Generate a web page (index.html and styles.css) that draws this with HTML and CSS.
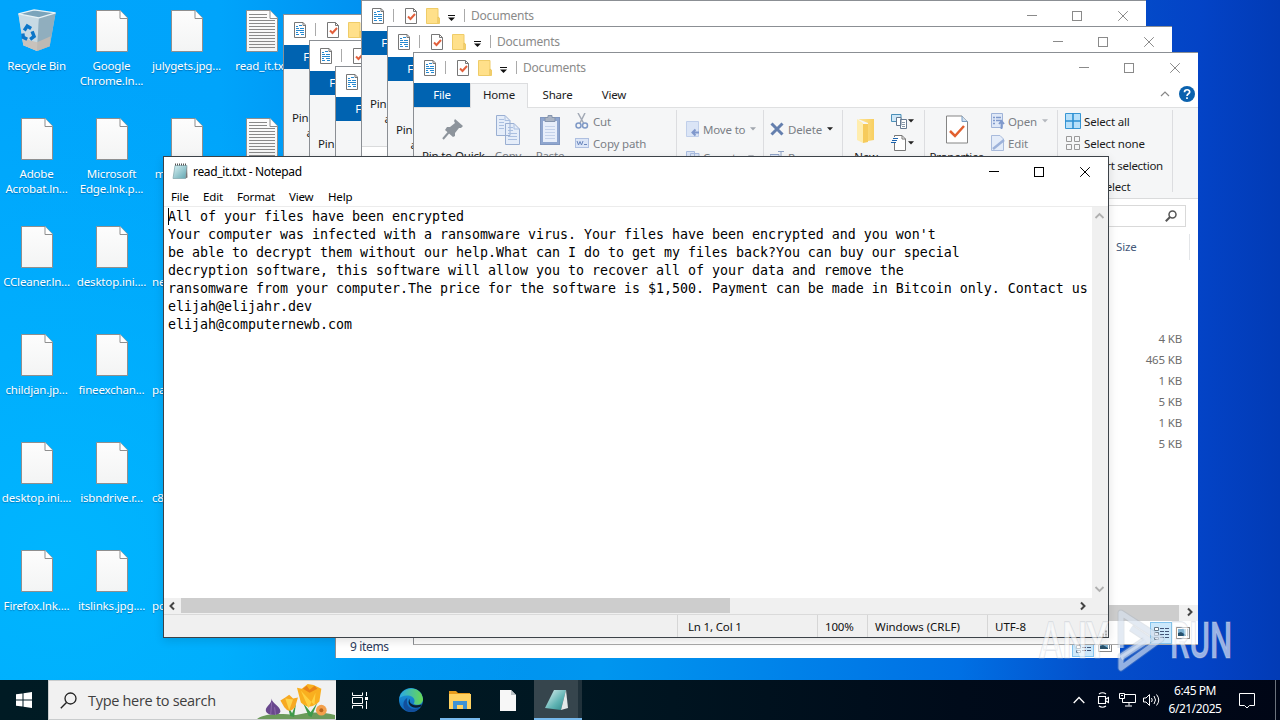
FILE: index.html
```html
<!DOCTYPE html>
<html lang="en">
<head>
<meta charset="utf-8">
<title>Desktop</title>
<link rel="stylesheet" href="styles.css">
</head>
<body>
<svg class="defs" aria-hidden="true">
  <defs>
    <linearGradient id="paper" x1="0" y1="0" x2="0" y2="1"><stop offset="0" stop-color="#fdfdfd"/><stop offset="1" stop-color="#f3f4f4"/></linearGradient>
    <linearGradient id="pad" x1="0" y1="0" x2="1" y2="1"><stop offset="0" stop-color="#d9f1f3"/><stop offset="1" stop-color="#5fa5b0"/></linearGradient>
    <linearGradient id="padBig" x1="0" y1="0" x2="1" y2="1"><stop offset="0" stop-color="#e4f3f3"/><stop offset=".6" stop-color="#5fb3b3"/><stop offset="1" stop-color="#2c8588"/></linearGradient>
    <linearGradient id="edgeBlue" x1="0" y1="0" x2="0" y2="1"><stop offset="0" stop-color="#1fa0dc"/><stop offset="1" stop-color="#0d62bc"/></linearGradient>
    <linearGradient id="edgeGreen" x1="0" y1="0" x2="1" y2="0"><stop offset="0" stop-color="#2aa9e6"/><stop offset="1" stop-color="#68d852"/></linearGradient>
    <linearGradient id="fold" x1="0" y1="0" x2="1" y2="0"><stop offset="0" stop-color="#ffe69a"/><stop offset="1" stop-color="#f8cf61"/></linearGradient>
  </defs>
  <symbol id="page" viewBox="0 0 32 42"><path d="M.5.5H24L31.500 8V41.500H.5z" fill="url(#paper)" stroke="#8f8f8f"/><path d="M24 .5V8.500H31.500" fill="#fff" stroke="#8f8f8f"/></symbol>
  <symbol id="textpage" viewBox="0 0 32 42"><use href="#page"/><path d="M3 4.500H21M3 7.500H21M3 10.500H29M3 13.500H29M3 16.500H29M3 19.500H29M3 22.500H29M3 25.500H29M3 28.500H29M3 31.500H29M3 34.500H29M3 37.500H29" stroke="#8a8a8a"/></symbol>
  <symbol id="doc" viewBox="0 0 14 16"><path d="M1.500.5H10L12.500 3V15.500H1.500z" fill="#fff" stroke="#777"/><path d="M10 .5V3.500H12.500" fill="none" stroke="#777"/><path d="M3 4.500H5M6 3.500H9M3 6.500H6M7 6.500H11M3 8.500H11M3 10.500H5M7 10.500H11M3 12.500H6M8 12.500H11" stroke="#2589d0" stroke-width="1.200"/></symbol>
  <symbol id="check" viewBox="0 0 14 16"><path d="M1.500.5H9.500L12.500 3.500V15.500H1.500z" fill="#fff" stroke="#777"/><path d="M9.500.5V3.500H12.500" fill="none" stroke="#777"/><path d="M4 8.500L6.500 11L11 6" fill="none" stroke="#e2603c" stroke-width="2"/></symbol>
  <symbol id="yfolder" viewBox="0 0 14 16"><path d="M.5.5H12V9L13.500 10V15.500H.5z" fill="#ffe08a" stroke="#efcc68"/><path d="M12 9V15" stroke="#e3ba4e"/></symbol>
  <symbol id="drop" viewBox="0 0 7 6"><path d="M0 .5H7" stroke="#111"/><path d="M0 2.500H7L3.500 6z" fill="#111"/></symbol>
  <symbol id="min" viewBox="0 0 10 10"><path d="M0 4.500H10" stroke="currentColor"/></symbol>
  <symbol id="max" viewBox="0 0 10 10"><rect x=".5" y=".5" width="9" height="9" fill="none" stroke="currentColor"/></symbol>
  <symbol id="close" viewBox="0 0 10 10"><path d="M.2.2L9.800 9.800M9.800.2L.2 9.800" stroke="currentColor"/></symbol>
  <symbol id="caret" viewBox="0 0 6 4"><path d="M0 .3H6L3 3.500z" fill="currentColor"/></symbol>
  <symbol id="details" viewBox="0 0 22 22"><rect x=".5" y=".5" width="21" height="21" fill="#cce8fb" stroke="#84c4ee"/><path d="M4.500 5.500h4v3h-4zM4.500 10.500h4v3h-4zM4.500 15.500h4v2h-4z" fill="#fff" stroke="#678"/><path d="M10 6.500h4M15 6.500h4M10 9.500h4M15 9.500h4M10 12.500h4M15 12.500h4M10 15.500h4M15 15.500h4" stroke="#457"/></symbol>
  <symbol id="thumbs" viewBox="0 0 14 12"><rect x=".5" y=".5" width="13" height="11" fill="#fff" stroke="#888"/><rect x="2" y="2" width="8" height="7" fill="#7fb2d2"/><path d="M2 9V6L5 5L10 8V9z" fill="#27506a"/><path d="M11.500 2V9" stroke="#789"/></symbol>
</svg>

<main class="desktop">
  <section class="icons">
    <div class="cell">
      <svg class="bin" viewBox="0 0 40 44"><path d="M1 5L17 1L39 4L33 38L20 43L6 37z" fill="#a9c4d3"/><path d="M1 5L22 9L20 43L6 37z" fill="#c7dae4"/><path d="M22 9L39 4L33 38L20 43z" fill="#90aebe"/><path d="M5 30L20 34L34 28L33 38L20 43L6 37z" fill="#c8bcb2" opacity=".8"/><path d="M1 5L17 1L39 4L22 9z" fill="#7ba4bb" stroke="#e8f2f6" stroke-width="1.300"/><g fill="none" stroke="#0c76c8" stroke-width="3.500"><path d="M7 22L10 17.500L14 20"/><path d="M15 23L17 28L13 31"/><path d="M10 31L6 29L5.500 25"/></g></svg>
      <span>Recycle Bin</span></div>
    <div class="cell"><svg><use href="#page"/></svg><span>Google<br>Chrome.ln...</span></div>
    <div class="cell"><svg><use href="#page"/></svg><span>julygets.jpg...</span></div>
    <div class="cell"><svg><use href="#textpage"/></svg><span>read_it.txt</span></div>

    <div class="cell"><svg><use href="#page"/></svg><span>Adobe<br>Acrobat.ln...</span></div>
    <div class="cell"><svg><use href="#page"/></svg><span>Microsoft<br>Edge.lnk.p...</span></div>
    <div class="cell start"><svg><use href="#page"/></svg><span>&nbsp;m</span></div>
    <div class="cell"><svg><use href="#textpage"/></svg></div>

    <div class="cell"><svg><use href="#page"/></svg><span>CCleaner.ln...</span></div>
    <div class="cell"><svg><use href="#page"/></svg><span>desktop.ini....</span></div>
    <div class="cell start"><span class="low">ne</span></div>
    <div class="cell"></div>

    <div class="cell"><svg><use href="#page"/></svg><span>childjan.jp...</span></div>
    <div class="cell"><svg><use href="#page"/></svg><span>fineexchan...</span></div>
    <div class="cell start"><span class="low">pa</span></div>
    <div class="cell"></div>

    <div class="cell"><svg><use href="#page"/></svg><span>desktop.ini....</span></div>
    <div class="cell"><svg><use href="#page"/></svg><span>isbndrive.r...</span></div>
    <div class="cell start"><span class="low">c8</span></div>
    <div class="cell"></div>

    <div class="cell"><svg><use href="#page"/></svg><span>Firefox.lnk....</span></div>
    <div class="cell"><svg><use href="#page"/></svg><span>itslinks.jpg....</span></div>
    <div class="cell start"><span class="low">pc</span></div>
    <div class="cell"></div>
  </section>

  <section class="win explorer w1">
    <header class="bar"><svg class="i14"><use href="#doc"/></svg><i class="sep s1"></i><svg class="i14"><use href="#check"/></svg><svg class="i14 fo"><use href="#yfolder"/></svg></header>
    <nav class="tabs"><b class="file">File</b></nav>
    <div class="ribbon"><div class="pin stub"><span>Pin to Quick<br>access</span></div></div>
  </section>
  <section class="win explorer w2">
    <header class="bar"><svg class="i14"><use href="#doc"/></svg><i class="sep s1"></i><svg class="i14"><use href="#check"/></svg></header>
    <nav class="tabs"><b class="file">File</b></nav>
    <div class="ribbon"><div class="pin stub"><span>Pin to Quick<br>access</span></div></div>
  </section>
  <section class="win explorer w3">
    <header class="bar"><svg class="i14"><use href="#doc"/></svg></header>
    <nav class="tabs"><b class="file">File</b></nav>
    <div class="ribbon"></div>
    <div class="filler"></div>
    <footer class="foot"><span class="count">9 items</span><svg class="v1"><use href="#details"/></svg><svg class="v2"><use href="#thumbs"/></svg></footer>
  </section>
  <section class="win explorer w4">
    <header class="bar"><svg class="i14"><use href="#doc"/></svg><i class="sep s1"></i><svg class="i14"><use href="#check"/></svg><svg class="i14 fo"><use href="#yfolder"/></svg><svg class="dd"><use href="#drop"/></svg><i class="sep s2"></i><span class="title">Documents</span><span class="ctl"><svg><use href="#min"/></svg><svg><use href="#max"/></svg><svg><use href="#close"/></svg></span></header>
    <nav class="tabs"><b class="file">File</b></nav>
    <div class="ribbon"><div class="pin stub"><span>Pin to Quick<br>access</span></div></div>
  </section>
  <section class="win explorer w5">
    <header class="bar"><svg class="i14"><use href="#doc"/></svg><i class="sep s1"></i><svg class="i14"><use href="#check"/></svg><svg class="i14 fo"><use href="#yfolder"/></svg><svg class="dd"><use href="#drop"/></svg><i class="sep s2"></i><span class="title">Documents</span><span class="ctl"><svg><use href="#min"/></svg><svg><use href="#max"/></svg><svg><use href="#close"/></svg></span></header>
    <nav class="tabs"><b class="file">File</b></nav>
    <div class="ribbon"><div class="pin stub"><span>Pin to Quick<br>access</span></div></div>
  </section>

  <section class="win explorer w6">
    <header class="bar"><svg class="i14"><use href="#doc"/></svg><i class="sep s1"></i><svg class="i14"><use href="#check"/></svg><svg class="i14 fo"><use href="#yfolder"/></svg><svg class="dd"><use href="#drop"/></svg><i class="sep s2"></i><span class="title">Documents</span><span class="ctl"><svg><use href="#min"/></svg><svg><use href="#max"/></svg><svg><use href="#close"/></svg></span></header>
    <nav class="tabs"><b class="file">File</b><span class="home">Home</span><span class="tab">Share</span><span class="tab view">View</span>
      <svg class="help" viewBox="0 0 35 16"><path d="M1 10L5 6L9 10" fill="none" stroke="#888" stroke-width="1.200"/><circle cx="27" cy="8" r="8" fill="#0b62ae"/><path d="M24.500 6.200C24.500 3 29.800 3 29.700 6C29.700 7.800 27 7.800 27 10M27 11.200V13" fill="none" stroke="#fff" stroke-width="1.700"/></svg>
    </nav>
    <div class="ribbon">
      <div class="group g1">
        <div class="pin"><svg viewBox="0 0 22 22"><path d="M13 1L21 8L19 10L17 10L13 15L13 18L11 19L3 12L5 9L8 9L13 5L12 3z" fill="#8d949c"/><path d="M7 14L1 21" stroke="#8d949c" stroke-width="2"/></svg><span>Pin to Quick<br>access</span></div>
        <div class="big copy"><svg viewBox="0 0 24 30"><path d="M.5.5H9L14 5.500V20.500H.5zM9.500 8.500H18L23.500 14V29.500H9.500z" fill="#e5edf9" stroke="#9aafd2"/><path d="M9 .5V5.500H14M18 8.500V14H23.500M3 4.500h5M3 7.500h5M3 10.500h5M3 13.500h5M12 12.500h5M12 15.500h5M12 18.500h9M12 21.500h9M12 24.500h9" fill="none" stroke="#aabfe0"/></svg><span>Copy</span></div>
        <div class="big paste"><svg viewBox="0 0 22 30"><rect x="1.500" y="2.500" width="19" height="27" fill="#8fa6cf" stroke="#8298c0"/><rect x="4" y="6" width="14" height="21" fill="#e7eefa"/><path d="M6 2.500h3V.5h4v2h3v4H6z" fill="#aab4c4" stroke="#8595ae"/><path d="M6 11.500h10M6 14.500h10M6 17.500h10M6 20.500h10M6 23.500h10" stroke="#c4d2ea"/></svg><span>Paste</span></div>
        <div class="list muted"><div><svg viewBox="0 0 14 16"><path d="M3 0L8.500 10M10 0L5 10" stroke="#a3aab6" stroke-width="1.500" fill="none"/><circle cx="3.500" cy="12.500" r="2.500" fill="none" stroke="#7f99c6" stroke-width="1.500"/><circle cx="10" cy="12.500" r="2.500" fill="none" stroke="#7f99c6" stroke-width="1.500"/></svg>Cut</div><div><svg viewBox="0 0 14 16"><rect x=".5" y="3.500" width="13" height="9" fill="#dce6f7" stroke="#aebfe0"/><path d="M2 6l1.500 4L5 6.500L6.500 10L8 6M9 9.500h3" fill="none" stroke="#6b87bd"/></svg>Copy path</div></div>
      </div>
      <div class="group g2 muted">
        <div class="line"><svg viewBox="0 0 14 16"><path d="M.5.5H12.500V15.500H.5z" fill="#dbe5f6" stroke="#c0cfea"/><path d="M13 11.500H7M9.500 8.500L6.500 11.500L9.500 14.500" fill="none" stroke="#8098cc" stroke-width="2"/></svg>Move to<svg class="ca"><use href="#caret"/></svg></div>
        <div class="line"><svg viewBox="0 0 14 16"><path d="M.5 2.500H8.500V15H.5zM4.500 4.500H13V15H4.500z" fill="#dbe5f6" stroke="#aabde0"/></svg>Copy to<svg class="ca"><use href="#caret"/></svg></div>
      </div>
      <div class="group g3 muted">
        <div class="line"><svg viewBox="0 0 14 16"><path d="M1.500 2.500L12.500 13.500M12.500 2.500L1.500 13.500" stroke="#647fae" stroke-width="3"/></svg>Delete<svg class="ca dark"><use href="#caret"/></svg></div>
        <div class="line"><svg viewBox="0 0 14 16"><path d="M0 5.500H9V10H0zM8 2.500H14M11 2.500V14" fill="#dbe5f6" stroke="#8fa3c6"/></svg>Rename</div>
      </div>
      <div class="group g4">
        <div class="big new"><svg viewBox="0 0 20 26"><path d="M2 1H18V22L12 23V5z" fill="url(#fold)"/><path d="M1 1L7 5V25L1 22z" fill="#ffedae"/><path d="M7 6H12V24L7 25z" fill="#f6cb5c"/></svg><span>New</span></div>
        <div class="mini"><div><svg viewBox="0 0 16 16"><path d="M.5 1.500H10V8.500H.5z" fill="#cfe7f7" stroke="#4a8fb8"/><path d="M5.500 4.500H10V12.500H5.500zM9.500 6.500H15.500V15.500H9.500z" fill="#fff" stroke="#647890"/><path d="M11 9.500h3M11 11.500h3M11 13.500h3" stroke="#89a"/></svg><svg class="ca dark"><use href="#caret"/></svg></div><div><svg viewBox="0 0 16 16"><path d="M3.500 2V.5H11L14.500 4V15.500H3.500V8" fill="#fff" stroke="#777"/><path d="M11 .5V4H14.500" fill="none" stroke="#777"/><path d="M2 3.500h5M1 5.500h5M0 7.500h5" fill="none" stroke="#1b63ae" stroke-width="1.200"/></svg><svg class="ca dark"><use href="#caret"/></svg></div></div>
      </div>
      <div class="group g5">
        <div class="big props"><svg viewBox="0 0 22 28"><path d="M.5.5H16L21.500 6V27.500H.5z" fill="#fff" stroke="#858585"/><path d="M16 .5V6H21.500" fill="#cfe0f2" stroke="#7a9cc0"/><path d="M4 15.500L9 20.500L18 10.500" fill="none" stroke="#e2602f" stroke-width="2.500"/></svg><span>Properties</span></div>
        <div class="list muted op"><div><svg viewBox="0 0 14 16"><path d="M.5.5H11.500V14.500H.5z" fill="#dfe8f7" stroke="#9fb3d8"/><path d="M2 4.500h2M5 4.500h5M2 7.500h2M5 7.500h5M2 10.500h2" stroke="#7f99cc" stroke-width="1.500"/><path d="M10.500 16V9M8 11L10.500 8L13 11" fill="none" stroke="#7f99cc" stroke-width="1.800"/></svg>Open<svg class="ca pale"><use href="#caret"/></svg></div><div><svg viewBox="0 0 14 16"><path d="M.5.5H9L12.500 4V15.500H.5z" fill="#e4ecf9" stroke="#a9bbdc"/><path d="M2 14L13 5" stroke="#9db2da" stroke-width="2.500"/></svg>Edit</div></div>
      </div>
      <div class="group g6">
        <div class="list sel"><div><svg viewBox="0 0 16 16"><path d="M.5.5h15v15H.5z" fill="#b7e0fa" stroke="#3796d4"/><path d="M8 0v16M0 8h16" stroke="#2d8fd2" stroke-width="1.600"/></svg>Select all</div><div><svg viewBox="0 0 16 16"><path d="M1.500 1.500h5v5h-5zM9.500 1.500h5v5h-5zM1.500 9.500h5v5h-5zM9.500 9.500h5v5h-5z" fill="none" stroke="#999"/></svg>Select none</div><div class="inv"><svg></svg>Invert selection</div></div>
        <div class="caption">Select</div>
      </div>
    </div>
    <div class="body">
      <div class="search"><svg viewBox="0 0 12 12"><circle cx="7.500" cy="4.500" r="3.500" fill="none" stroke="#555" stroke-width="1.500"/><path d="M5 7L.8 11.200" stroke="#555" stroke-width="2"/></svg></div>
      <div class="head">Size</div>
      <div class="sizes"><span>4 KB</span><span>465 KB</span><span>1 KB</span><span>5 KB</span><span>1 KB</span><span>5 KB</span></div>
    </div>
    <div class="hbar"><i></i><svg viewBox="0 0 19 16"><path d="M9 3.500L12.500 7L9 10.500" fill="none" stroke="#444" stroke-width="2"/></svg></div>
    <footer class="foot"><svg class="v1"><use href="#details"/></svg><svg class="v2"><use href="#thumbs"/></svg></footer>
  </section>

  <section class="win notepad">
    <header class="ntitle">
      <svg viewBox="0 0 16 17"><path d="M3 2.500H15L13.500 15.500H1z" fill="url(#pad)" stroke="#86aab0" stroke-width=".8"/><path d="M15 2.500L15.500 14.500L13.500 15.500z" fill="#777"/><path d="M3 1.500H15" stroke="#555" stroke-width="2" stroke-dasharray="1 1"/></svg>
      <span>read_it.txt - Notepad</span>
      <span class="ctl black"><svg><use href="#min"/></svg><svg><use href="#max"/></svg><svg><use href="#close"/></svg></span>
    </header>
    <nav class="menu"><span class="m1">File</span><span class="m2">Edit</span><span class="m3">Format</span><span class="m4">View</span><span>Help</span></nav>
    <div class="pane">
      <pre class="text">All of your files have been encrypted
Your computer was infected with a ransomware virus. Your files have been encrypted and you won't
be able to decrypt them without our help.What can I do to get my files back?You can buy our special
decryption software, this software will allow you to recover all of your data and remove the
ransomware from your computer.The price for the software is $1,500. Payment can be made in Bitcoin only. Contact us
elijah@elijahr.dev
elijah@computernewb.com</pre>
      <div class="vbar"><svg viewBox="0 0 16 18"><path d="M3.500 11L7.500 7L11.500 11" fill="none" stroke="#b0b0b0" stroke-width="1.800"/></svg><svg viewBox="0 0 16 18"><path d="M3.500 7L7.500 11L11.500 7" fill="none" stroke="#b0b0b0" stroke-width="1.800"/></svg></div>
    </div>
    <div class="nh"><svg viewBox="0 0 17 16"><path d="M10 4.500L6.500 8L10 11.500" fill="none" stroke="#444" stroke-width="2"/></svg><i></i><svg class="r" viewBox="0 0 17 16"><path d="M7 4.500L10.500 8L7 11.500" fill="none" stroke="#444" stroke-width="2"/></svg></div>
    <footer class="nstat"><span class="c0"></span><span class="c1">Ln 1, Col 1</span><span class="c2">100%</span><span class="c3">Windows (CRLF)</span><span class="c4">UTF-8</span><svg class="grip" viewBox="0 0 10 10"><path d="M1 8.500h2M4 8.500h2M7 8.500h2M4 5.500h2M7 5.500h2M7 2.500h2" stroke="#aaa" stroke-width="2"/></svg></footer>
  </section>

  <svg class="mark" viewBox="0 0 204 64">
    <g class="letters">
      <text x="2" y="50" textLength="69" lengthAdjust="spacingAndGlyphs">ANY</text>
      <text x="133" y="50" textLength="62" lengthAdjust="spacingAndGlyphs">RUN</text>
    </g>
    <g fill="none" stroke="#9fabbd" stroke-opacity=".3" stroke-width="7" stroke-linejoin="round"><path d="M84 40V5L124 31L84 60V48L108 32"/><path d="M94 20L112 32L84 50"/></g>
    <g fill="none" stroke="#e4ecfa" stroke-opacity=".55" stroke-width="5" stroke-linejoin="round"><path d="M84 40V5L124 31L84 60V48L108 32"/><path d="M94 20L112 32L84 50"/></g>
  </svg>
</main>

<footer class="taskbar">
  <div class="startbtn"><svg viewBox="0 0 16 16"><path d="M0 2.300L6.500 1.400V7.500H0zM7.500 1.200L16 0V7.500H7.500zM0 8.500H6.500V14.600L0 13.700zM7.500 8.500H16V16L7.500 14.800z" fill="#fff"/></svg></div>
  <div class="find">
    <svg class="glass" viewBox="0 0 17 17"><circle cx="10.500" cy="6.500" r="5.500" fill="none" stroke="#222" stroke-width="1.300"/><path d="M6.500 10.500L.8 16.200" stroke="#222" stroke-width="1.400"/></svg>
    <span>Type here to search</span>
    <svg class="flowers" viewBox="0 0 80 39"><path d="M0 39C10 32 28 34 40 35C55 31 70 32 80 35V39z" fill="#6b9a5a"/><path d="M34 36L31 24L36 33L40 23L38 37zM53 36L47 22L55 32L62 22L56 37z" fill="#3f9a4a"/><path d="M15 18C15 23 24 26 24 31C24 36 9 36 9 30C9 26 15 24 15 18" fill="#69478d"/><path d="M15 22L14 35M18 27L19 35" stroke="#8d6bac"/><path d="M24 20L29 17L33 14L37 18L42 17L39 27Q33 34 28 27z" fill="#f7a922"/><path d="M29 18L33 30L37 19" fill="#fdd34c"/><path d="M41 7L46 8L52 3L58 4L66 8L64 21Q54 31 45 22z" fill="#f9af1f"/><path d="M45 10L53 28L60 12L59 25" fill="#ffd040"/><path d="M47 8L51 5L54 9L59 5L62 8L54 12z" fill="#e98318"/><circle cx="66" cy="30" r="5.500" fill="#f3a04c"/><circle cx="66" cy="30" r="2" fill="#b8651c"/></svg>
  </div>
  <div class="tasks">
    <div><svg width="18" height="17" viewBox="0 0 18 17"><path d="M1.500.5V3.500H11.500V.5M1.500 16.500V13.500H11.500V16.500M1.500 5.500H11.500V11.500H1.500zM15.500 0V4M15.500 9V17" fill="none" stroke="#fff"/><path d="M14 5h3v3h-3z" fill="#fff"/></svg></div>
    <div class="edge"><svg width="24" height="24" viewBox="0 0 24 24"><circle cx="12" cy="12" r="12" fill="url(#edgeBlue)"/><path d="M.5 10C2-1 22-4 24 11C24 17 17 18 14.500 15.500C17 13 15 8 9.500 7.500C5 7 1.500 9 .5 10" fill="url(#edgeGreen)"/><path d="M8 12C7 20 14 23 21 19.500C18 24 12 25 8 23C3 20 3 12 9 9.500C8 10 8 11 8 12" fill="#124f9c"/><path d="M11 11C9 15 14 19 23 16.500L22 18.500C14 22 8 17 10 12z" fill="#0a1d30"/></svg></div>
    <div class="run"><svg width="22" height="20" viewBox="0 0 22 20"><path d="M0 1H7L9 3H21V19H0z" fill="#e79c1d"/><path d="M0 4H22V19H0z" fill="#ffd262"/><path d="M4 19V11H18V19H14V15H8V19z" fill="#3f93d6"/></svg></div>
    <div><svg width="16" height="21" viewBox="0 0 16 21"><path d="M0 0H11L16 5V21H0z" fill="#f7f7f7"/><path d="M11 0V5H16z" fill="#bcc3c7"/></svg></div>
    <div class="active"><svg width="24" height="21" viewBox="0 0 24 21"><path d="M9 0H21L16 20L0 18z" fill="url(#padBig)"/><path d="M21 0L23 18L16 20z" fill="#e3e8e8"/></svg></div>
  </div>
  <div class="tray">
    <svg class="up" width="12" height="8" viewBox="0 0 12 8"><path d="M.7 7L6 1.500L11.300 7" fill="none" stroke="#fff" stroke-width="1.300"/></svg>
    <svg class="cam" width="12" height="16" viewBox="0 0 12 16"><path d="M2 2Q5.500-.5 9 2M2 14Q5.500 16.500 9 14M1.500 4.500H8.500V11.500H1.500zM9 7L11.500 5.500V10.500L9 9" fill="none" stroke="#fff" stroke-width="1.100"/></svg>
    <svg class="net" width="17" height="14" viewBox="0 0 17 14"><path d="M6 1.500H16.500V9.500H3.500V6M10 9.500V12.500M6 13H13M.5.500H5.500V5.500H.5zM2 2.500H4" fill="none" stroke="#fff"/></svg>
    <svg class="vol" width="17" height="14" viewBox="0 0 17 14"><path d="M.5 5H3L6.500 1.500V12.500L3 9H.5zM8.500 5Q10 7 8.500 9M11 3Q14 7 11 11M13.500 1.500Q18 7 13.500 12.500" fill="none" stroke="#fff"/></svg>
    <div class="clock"><span>6:45 PM</span><span>6/21/2025</span></div>
    <svg class="note" width="16" height="16" viewBox="0 0 16 16"><path d="M.5.500H15.500V12.500H10.500L8 15L5.500 12.500H.5z" fill="none" stroke="#fff"/></svg>
  </div>
</footer>
</body>
</html>
```
FILE: styles.css
```css
* { box-sizing: border-box; }
body {
  margin: 0; width: 1280px; height: 720px; overflow: hidden;
  display: flex; flex-direction: column;
  font-family: "Noto Sans", "Open Sans", sans-serif; font-size: 11.5px; color: #1b1b1b;
  letter-spacing: -0.17px;
}
svg { display: block; flex: none; }
.defs { position: absolute; width: 0; height: 0; }

.desktop {
  position: relative; flex: none; height: 680px; overflow: hidden;
  background:
    radial-gradient(ellipse 480px 480px at 60px 560px, rgba(0,184,255,.85), rgba(0,184,255,0)),
    linear-gradient(90deg, #00a5fc 0, #00a4fb 220px, #0092f1 360px, #0096ef 600px, #0070e4 960px, #0450cb 1090px, #0343c6 1200px, #023bb6 1280px);
}
.icons { display: grid; grid-template-columns: repeat(4, 75px); grid-auto-rows: 108px; width: 300px; margin-left: -1px; }
.cell { display: flex; flex-direction: column; align-items: center; padding-top: 10px; color: #fff; line-height: 15px; text-align: center; white-space: nowrap; text-shadow: 0 1px 1px rgba(0,40,90,.4); }
.cell svg { width: 32px; height: 42px; margin-bottom: 6px; }
.cell .bin { width: 40px; height: 43px; margin: -1px 0 6px; }
.cell.start span { align-self: flex-start; padding-left: 3px; }
.low { margin-top: 48px; }

.win { position: absolute; background: #fff; display: flex; flex-direction: column; overflow: hidden; }
.explorer { width: 785px; height: 592px; border: solid #8b8f94; border-width: 1px 0 0 1px; }
.w1 { left: 283px; top: 14px; }
.w2 { left: 309px; top: 40px; }
.w3 { left: 335px; top: 66px; }
.w4 { left: 361px; top: 0; }
.w5 { left: 387px; top: 26px; }
.w6 { left: 413px; top: 52px; height: 593px; border-bottom: 1px solid #aaa; }

.bar { height: 30px; flex: none; display: flex; align-items: center; padding-left: 9px; color: #8a8a8a; }
.i14 { width: 14px; height: 16px; }
.sep { width: 1px; height: 13px; background: #aaa; }
.s1 { margin: 0 10px 1px 8px; }
.fo { margin-left: 8px; }
.dd { width: 7px; height: 6px; margin: 3px 0 0 8px; }
.s2 { margin: 0 6px 1px 9px; }
.title { font-size: 12px; letter-spacing: -.2px; margin-bottom: 2px; }
.ctl { margin-left: auto; display: flex; gap: 36px; padding-right: 18px; margin-bottom: 1px; }
.ctl svg { width: 10px; height: 10px; }
.ctl svg:first-child { margin-right: -1px; }
.black { color: #000; }

.tabs { height: 24px; flex: none; display: flex; line-height: 24px; }
.file { width: 56px; background: #0063b1; color: #fff; font-weight: 400; text-align: center; }
.home { width: 58px; text-align: center; background: #f5f6f7; border: 1px solid #dcdddf; border-bottom: 0; line-height: 22px; }
.tab { width: 59px; text-align: center; }
.view { width: 54px; }
.help { width: 35px; height: 16px; margin: 3px 3px 0 auto; }
.ribbon { height: 92px; flex: none; background: #f5f6f7; border-bottom: 1px solid #dadbdc; display: flex; }
.w6 .ribbon { border-top: 1px solid #dfe0e1; }
.tabs .home { position: relative; height: 25px; }

.group { display: flex; height: 82px; margin-top: 2px; border-right: 1px solid #dcdde0; }
.g1 { width: 263px; }
.g2 { width: 87px; flex-direction: column; }
.g3 { width: 79px; flex-direction: column; }
.g4 { width: 82px; }
.g5 { width: 133px; }
.g6 { width: 115px; flex-direction: column; }
.muted { color: #7b7f86; }
.pin { width: 78px; padding-left: 8px; line-height: 15px; white-space: nowrap; display: flex; flex-direction: column; text-align: center; }
.pin svg { width: 22px; height: 22px; margin: 8px 0 8px 20px; }
.pin span { align-self: flex-start; }
.stub { padding-top: 41px; padding-left: 8px; }
.big { display: flex; flex-direction: column; align-items: center; line-height: 15px; }
.copy { width: 32px; padding-top: 5px; color: #7b7f86; }
.copy svg { width: 24px; height: 30px; margin-bottom: 3px; }
.paste { width: 42px; padding: 5px 0 0 10px; color: #7b7f86; }
.paste svg { width: 22px; height: 30px; margin-bottom: 3px; }
.list > div, .line { display: flex; align-items: center; height: 22px; white-space: nowrap; }
.list > div > svg:first-child, .line > svg:first-child { width: 14px; height: 16px; margin-right: 4px; }
.g1 .list { margin-left: 9px; }
.ca { width: 6px; height: 4px; margin-left: 5px; color: #a0a6ae; }
.dark { color: #222; }
.pale { color: #b4b8be; }
.g2, .g3 { padding: 8px 0 0 9px; gap: 6px; }
.g2 .line > svg:first-child { margin-right: 3px; }
.g3 { padding-left: 6px; }
.new { width: 46px; padding-top: 8px; }
.new svg { width: 20px; height: 26px; margin-bottom: 5px; }
.mini { margin-left: 2px; }
.mini > div { display: flex; align-items: center; height: 22px; }
.mini svg { width: 16px; height: 16px; }
.mini svg.ca { width: 6px; height: 4px; margin-left: 1px; }
.props { width: 63px; padding-top: 5px; }
.props svg { width: 22px; height: 29px; margin-bottom: 5px; }
.op { margin-left: 3px; }
.op > div > svg:first-child { margin-right: 3px; }
.sel > div > svg:first-child { width: 16px; margin-right: 3px; }
.sel { padding-left: 7px; }
.inv { letter-spacing: -.28px; }
.caption { text-align: center; line-height: 22px; }

.body { flex: 1; display: flex; flex-direction: column; align-items: flex-end; }
.search { width: 300px; height: 22px; margin: 6px 12px 0 0; border: 1px solid #d9d9d9; display: flex; align-items: center; justify-content: flex-end; padding-right: 8px; }
.search svg { width: 12px; height: 12px; }
.head { width: 82px; height: 26px; margin: 7px 8px 0 0; border: solid #e3e5e8; border-width: 0 1px; padding-left: 7px; line-height: 26px; color: #45597a; }
.sizes { display: flex; flex-direction: column; margin: 68px 16px 0 0; line-height: 21px; text-align: right; color: #6d6d6d; }
.hbar { height: 16px; flex: none; background: #f0f0f0; display: flex; justify-content: flex-end; }
.hbar i { width: 500px; background: #cdcdcd; }
.hbar svg { width: 19px; height: 16px; }
.foot { height: 23px; flex: none; display: flex; align-items: center; justify-content: flex-end; padding-right: 8px; }
.v1 { width: 22px; height: 22px; }
.v2 { width: 14px; height: 12px; margin-left: 4px; }
.filler { flex: 1; }
.w3 .foot { padding-bottom: 1px; }
.count { margin-right: auto; padding-left: 14px; color: #2b3a5c; font-size: 12px; letter-spacing: -.35px; }

.notepad { left: 163px; top: 156px; width: 946px; height: 482px; border: 1px solid #3c4248; box-shadow: 0 3px 9px rgba(0,0,0,.12); }
.ntitle { height: 30px; flex: none; display: flex; align-items: center; padding-left: 8px; color: #000; font-size: 12px; letter-spacing: -.33px; }
.ntitle > svg { width: 16px; height: 17px; margin: 0 5px 1px 0; }
.ntitle > span { margin-bottom: 2px; }
.ntitle > .ctl { margin-bottom: 0; }
.menu { height: 20px; flex: none; display: flex; line-height: 20px; padding-left: 7px; border-bottom: 1px solid #ececec; color: #000; }
.m1 { width: 32px; } .m2 { width: 34px; } .m3 { width: 52px; } .m4 { width: 39px; }
.pane { height: 391px; flex: none; display: flex; }
.text { margin: 0; flex: 1; padding: 1px 0 0 4px; font: 13.3px/18px "DejaVu Sans Mono", monospace; letter-spacing: -.007px; color: #000; background: linear-gradient(#000, #000) 4px 1px / 1px 17px no-repeat; }
.vbar { width: 16px; background: #f0f0f0; display: flex; flex-direction: column; justify-content: space-between; }
.vbar svg { width: 16px; height: 18px; }
.nh { height: 16px; flex: none; background: #f0f0f0; display: flex; }
.nh svg { width: 17px; height: 16px; }
.nh i { width: 549px; height: 15px; background: #cdcdcd; }
.nh .r { margin: 0 17px 0 auto; }
.nstat { flex: 1; background: #f0f0f0; border-top: 1px solid #dadada; display: flex; line-height: 24px; color: #111; }
.nstat span { border-right: 1px solid #d6d6d6; }
.c0 { width: 514px; } .c1 { width: 140px; padding-left: 10px; } .c2 { width: 50px; padding-left: 7px; } .c3 { width: 120px; padding-left: 7px; letter-spacing: -.05px; }
.nstat .c4 { border: 0; padding-left: 7px; flex: 1; letter-spacing: 0; }
.grip { width: 10px; height: 10px; align-self: flex-end; }
.mark { position: absolute; left: 1037px; top: 608px; width: 204px; height: 64px; }
.letters { font: 500 50px Roboto, sans-serif; fill: #fff; fill-opacity: .6; stroke: #a3adbd; stroke-opacity: .35; stroke-width: 1.6px; paint-order: stroke; }

.taskbar { height: 40px; flex: none; display: flex; background: linear-gradient(90deg, #001b24, #001722 45%, #000b1a 75%, #000616); color: #fff; }
.startbtn { width: 48px; display: grid; place-items: center; }
.startbtn svg { width: 16px; height: 16px; }
.find { width: 288px; background: #f1f1f1; border: 1px solid #c9cccd; border-width: 1px 0 1px 1px; display: flex; align-items: center; color: #3f3f3f; font: 14.5px "Open Sans", sans-serif; letter-spacing: -.3px; }
.glass { width: 17px; height: 17px; margin: 0 11px; }
.flowers { width: 80px; height: 38px; margin-left: auto; }
.tasks { display: flex; }
.tasks > div { width: 48px; display: grid; place-items: center; }
.tasks > .edge { padding-left: 6px; }
.tasks > div.run { width: 40px; margin: 0 4px 0 8px; border-bottom: 2px solid #76b9ed; padding-top: 2px; }
.tasks > div.active { width: 48px; margin-left: 2px; padding-right: 3px; background: linear-gradient(90deg, #36454d 44px, #20313a 44px); border-bottom: 2px solid #76b9ed; padding-top: 2px; }
.tray { margin-left: auto; display: flex; align-items: center; padding-right: 20px; border-right: 1px solid #6c737d; margin-right: 4px; }
.up { margin-right: 12px; }
.cam { margin-right: 10px; }
.net { margin-right: 7px; }
.vol { margin-right: 5px; }
.clock { display: flex; flex-direction: column; width: 60px; text-align: center; line-height: 18px; font-size: 12px; letter-spacing: -.45px; }
.note { margin: 2px 11px 0 14px; margin-right: 0; }
```
